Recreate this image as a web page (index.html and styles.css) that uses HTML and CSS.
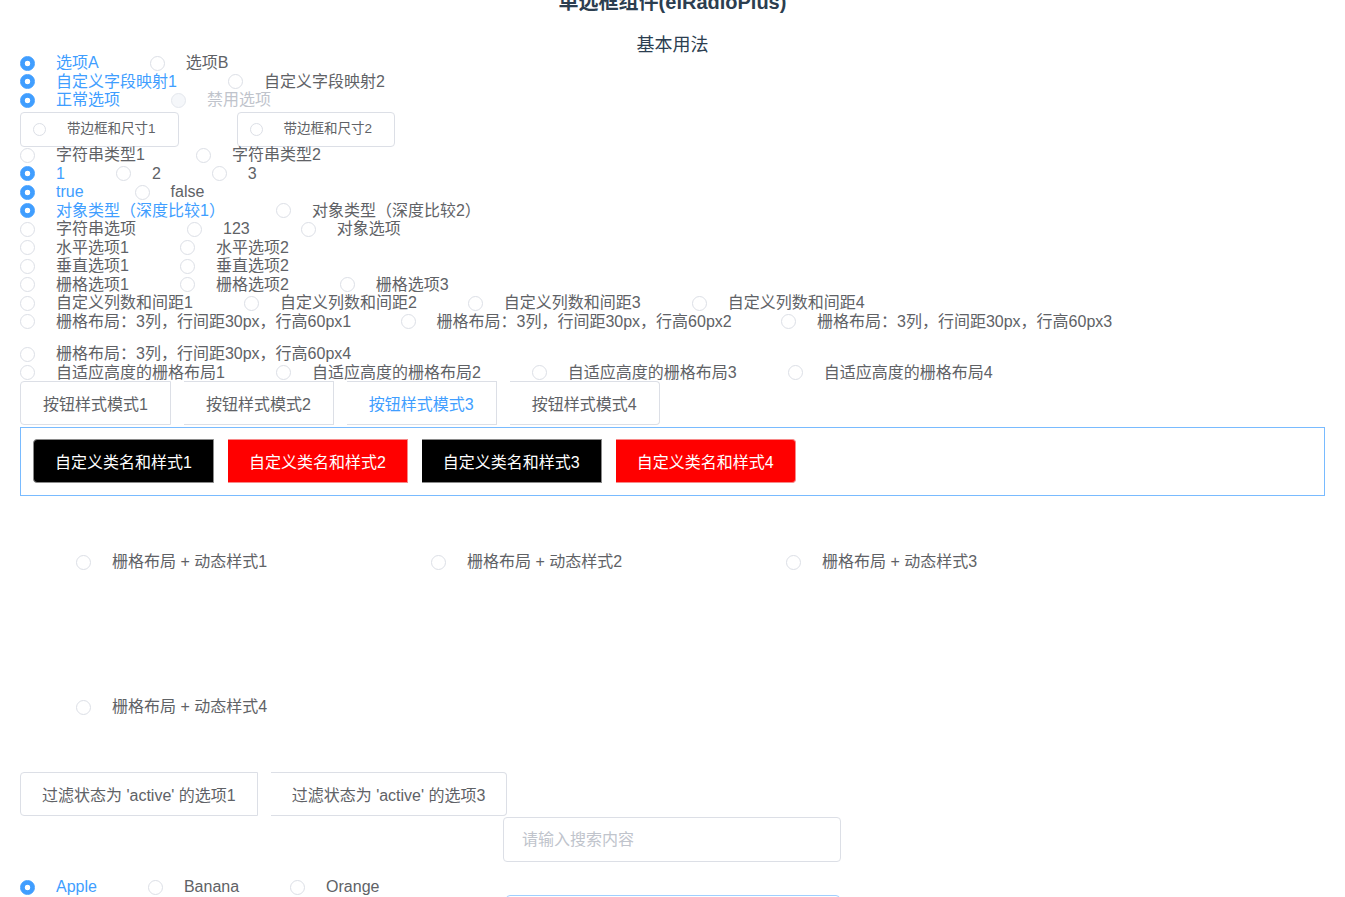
FILE: index.html
```html
<!DOCTYPE html>
<html lang="zh-CN">
<head>
<meta charset="utf-8">
<title>单选框组件(elRadioPlus)</title>
<link rel="stylesheet" href="styles.css">
</head>
<body>
<div class="page">
  <h1 class="title">单选框组件(elRadioPlus)</h1>
  <h2 class="subtitle">基本用法</h2>

  <div class="rows">
    <div class="row">
      <label class="radio is-checked"><span class="radio__input"></span><span class="radio__label">选项A</span></label>
      <label class="radio"><span class="radio__input"></span><span class="radio__label">选项B</span></label>
    </div>
    <div class="row">
      <label class="radio is-checked"><span class="radio__input"></span><span class="radio__label">自定义字段映射1</span></label>
      <label class="radio"><span class="radio__input"></span><span class="radio__label">自定义字段映射2</span></label>
    </div>
    <div class="row">
      <label class="radio is-checked"><span class="radio__input"></span><span class="radio__label">正常选项</span></label>
      <label class="radio is-disabled"><span class="radio__input"></span><span class="radio__label">禁用选项</span></label>
    </div>
    <div class="row row--bordered">
      <label class="radio is-bordered"><span class="radio__input"></span><span class="radio__label">带边框和尺寸1</span></label>
      <label class="radio is-bordered"><span class="radio__input"></span><span class="radio__label">带边框和尺寸2</span></label>
    </div>
    <div class="row">
      <label class="radio"><span class="radio__input"></span><span class="radio__label">字符串类型1</span></label>
      <label class="radio"><span class="radio__input"></span><span class="radio__label">字符串类型2</span></label>
    </div>
    <div class="row">
      <label class="radio is-checked"><span class="radio__input"></span><span class="radio__label">1</span></label>
      <label class="radio"><span class="radio__input"></span><span class="radio__label">2</span></label>
      <label class="radio"><span class="radio__input"></span><span class="radio__label">3</span></label>
    </div>
    <div class="row">
      <label class="radio is-checked"><span class="radio__input"></span><span class="radio__label">true</span></label>
      <label class="radio"><span class="radio__input"></span><span class="radio__label">false</span></label>
    </div>
    <div class="row">
      <label class="radio is-checked"><span class="radio__input"></span><span class="radio__label">对象类型（深度比较1）</span></label>
      <label class="radio"><span class="radio__input"></span><span class="radio__label">对象类型（深度比较2）</span></label>
    </div>
    <div class="row">
      <label class="radio"><span class="radio__input"></span><span class="radio__label">字符串选项</span></label>
      <label class="radio"><span class="radio__input"></span><span class="radio__label">123</span></label>
      <label class="radio"><span class="radio__input"></span><span class="radio__label">对象选项</span></label>
    </div>
    <div class="row">
      <label class="radio"><span class="radio__input"></span><span class="radio__label">水平选项1</span></label>
      <label class="radio"><span class="radio__input"></span><span class="radio__label">水平选项2</span></label>
    </div>
    <div class="row">
      <label class="radio"><span class="radio__input"></span><span class="radio__label">垂直选项1</span></label>
      <label class="radio"><span class="radio__input"></span><span class="radio__label">垂直选项2</span></label>
    </div>
    <div class="row">
      <label class="radio"><span class="radio__input"></span><span class="radio__label">栅格选项1</span></label>
      <label class="radio"><span class="radio__input"></span><span class="radio__label">栅格选项2</span></label>
      <label class="radio"><span class="radio__input"></span><span class="radio__label">栅格选项3</span></label>
    </div>
    <div class="row">
      <label class="radio"><span class="radio__input"></span><span class="radio__label">自定义列数和间距1</span></label>
      <label class="radio"><span class="radio__input"></span><span class="radio__label">自定义列数和间距2</span></label>
      <label class="radio"><span class="radio__input"></span><span class="radio__label">自定义列数和间距3</span></label>
      <label class="radio"><span class="radio__input"></span><span class="radio__label">自定义列数和间距4</span></label>
    </div>
    <div class="grid3">
      <label class="radio"><span class="radio__input"></span><span class="radio__label">栅格布局：3列，行间距30px，行高60px1</span></label>
      <label class="radio"><span class="radio__input"></span><span class="radio__label">栅格布局：3列，行间距30px，行高60px2</span></label>
      <label class="radio"><span class="radio__input"></span><span class="radio__label">栅格布局：3列，行间距30px，行高60px3</span></label>
      <label class="radio"><span class="radio__input"></span><span class="radio__label">栅格布局：3列，行间距30px，行高60px4</span></label>
    </div>
    <div class="row">
      <label class="radio"><span class="radio__input"></span><span class="radio__label">自适应高度的栅格布局1</span></label>
      <label class="radio"><span class="radio__input"></span><span class="radio__label">自适应高度的栅格布局2</span></label>
      <label class="radio"><span class="radio__input"></span><span class="radio__label">自适应高度的栅格布局3</span></label>
      <label class="radio"><span class="radio__input"></span><span class="radio__label">自适应高度的栅格布局4</span></label>
    </div>
  </div>

  <div class="btn-group tabs">
    <span class="rbtn">按钮样式模式1</span>
    <span class="rbtn">按钮样式模式2</span>
    <span class="rbtn is-active">按钮样式模式3</span>
    <span class="rbtn">按钮样式模式4</span>
  </div>

  <div class="custom-box">
    <div class="btn-group">
      <span class="rbtn rbtn--black">自定义类名和样式1</span>
      <span class="rbtn rbtn--red">自定义类名和样式2</span>
      <span class="rbtn rbtn--black">自定义类名和样式3</span>
      <span class="rbtn rbtn--red">自定义类名和样式4</span>
    </div>
  </div>

  <div class="dyn-grid">
    <label class="radio"><span class="radio__input"></span><span class="radio__label">栅格布局 + 动态样式1</span></label>
    <label class="radio"><span class="radio__input"></span><span class="radio__label">栅格布局 + 动态样式2</span></label>
    <label class="radio"><span class="radio__input"></span><span class="radio__label">栅格布局 + 动态样式3</span></label>
    <label class="radio"><span class="radio__input"></span><span class="radio__label">栅格布局 + 动态样式4</span></label>
  </div>

  <div class="btn-group filter">
    <span class="rbtn">过滤状态为 'active' 的选项1</span>
    <span class="rbtn">过滤状态为 'active' 的选项3</span>
  </div>

  <div class="search">
    <input class="search__input" type="text" placeholder="请输入搜索内容">
  </div>

  <div class="row fruit-row">
    <label class="radio is-checked"><span class="radio__input"></span><span class="radio__label">Apple</span></label>
    <label class="radio"><span class="radio__input"></span><span class="radio__label">Banana</span></label>
    <label class="radio"><span class="radio__input"></span><span class="radio__label">Orange</span></label>
  </div>

  <div class="focus-box"></div>
</div>
</body>
</html>
```

FILE: styles.css
```css
html, body {
  margin: 0;
  padding: 0;
  background: #fff;
}

body {
  font-family: "Liberation Sans", "Noto Sans CJK SC", sans-serif;
  font-size: 16px;
  color: #606266;
}

.page {
  padding: 0 20px 40px;
}

.title {
  margin: -9px 0 0;
  font-size: 20px;
  line-height: 23px;
  font-weight: bold;
  text-align: center;
  color: #2c3e50;
}

.subtitle {
  margin: 21px 0 0;
  font-size: 18px;
  line-height: 20px;
  font-weight: normal;
  text-align: center;
  color: #2c3e50;
}

.rows {
  margin-top: -1px;
}

.row {
  display: flex;
  align-items: center;
  height: 18.5px;
  line-height: 18.5px;
  white-space: nowrap;
}

.radio {
  display: inline-flex;
  align-items: center;
  margin-right: 30px;
  color: #606266;
  white-space: nowrap;
  cursor: pointer;
}

.radio__input {
  flex: none;
  width: 15px;
  height: 15px;
  box-sizing: border-box;
  border: 1px solid #dcdfe6;
  border-radius: 50%;
  background: #fff;
}

.radio__label {
  padding: 0 21px 0 21px;
}

.radio.is-checked .radio__label {
  color: #409eff;
}

.radio.is-checked .radio__input {
  border-color: #409eff;
  background: radial-gradient(circle, #fff 0, #fff 2.5px, #409eff 3.1px);
}

.radio.is-disabled .radio__input {
  background: #f5f7fa;
  border-color: #e4e7ed;
}

.radio.is-disabled .radio__label {
  color: #c0c4cc;
}

.row--bordered {
  height: 35px;
  margin: 2.5px 0 -1px;
}

.radio.is-bordered {
  height: 35px;
  box-sizing: border-box;
  padding: 0 22px 0 12px;
  border: 1px solid #dcdfe6;
  border-radius: 4px;
  margin-right: 58px;
  font-size: 13.5px;
}

.radio.is-bordered .radio__input {
  width: 13px;
  height: 13px;
}

.radio.is-bordered .radio__label {
  padding: 0 0 0 21px;
}

.grid3 {
  display: grid;
  grid-template-columns: repeat(3, 380.5px);
  row-gap: 14px;
  line-height: 18.5px;
}

.grid3 .radio {
  height: 18.5px;
}

.btn-group {
  display: flex;
  align-items: center;
}

.rbtn {
  display: inline-flex;
  align-items: center;
  height: 44px;
  box-sizing: border-box;
  padding: 0 22px;
  border: 1px solid #dcdfe6;
  border-left: 0;
  background: #fff;
  color: #606266;
  white-space: nowrap;
  cursor: pointer;
}

.rbtn + .rbtn {
  margin-left: 13px;
}

.rbtn:first-child {
  border-left: 1px solid #dcdfe6;
  border-radius: 4px 0 0 4px;
}

.rbtn:last-child {
  border-radius: 0 4px 4px 0;
}

.rbtn.is-active {
  color: #409eff;
}

.tabs {
  margin-top: -1px;
}

.custom-box {
  margin-top: 2px;
  border: 1px solid #79bbff;
  padding: 11px 12px 12px;
}

.custom-box .rbtn {
  padding: 0 21px;
  color: #fff;
  margin-left: 14px;
}

.custom-box .rbtn:first-child {
  margin-left: 0;
}

.rbtn--black {
  background: #000;
  border-color: #8a8a8a;
}

.custom-box .rbtn--black:first-child {
  border-left-color: #8a8a8a;
}

.rbtn--red {
  background: #f00;
  border-color: #f78989;
}

.dyn-grid {
  display: grid;
  grid-template-columns: repeat(3, 355px);
  grid-auto-rows: 60px;
  row-gap: 85px;
  margin-top: 36px;
  padding-left: 56px;
  line-height: 18.5px;
}

.dyn-grid .radio {
  align-self: center;
}

.filter {
  margin-top: 35px;
}

.filter .rbtn {
  padding: 0 21px;
}

.search {
  margin: 1px 0 0 483px;
}

.search__input {
  display: block;
  width: 338px;
  height: 45px;
  box-sizing: border-box;
  padding: 0 18px;
  border: 1px solid #dcdfe6;
  border-radius: 4px;
  font-family: "Liberation Sans", "Noto Sans CJK SC", sans-serif;
  font-size: 16px;
  color: #606266;
  outline: none;
}

.search__input::placeholder {
  color: #c0c4cc;
}

.fruit-row {
  margin-top: 16px;
}

.focus-box {
  margin: -1.5px 0 0 486px;
  width: 332px;
  height: 30px;
  border: 1px solid #a0cfff;
  border-radius: 4px;
}
```
